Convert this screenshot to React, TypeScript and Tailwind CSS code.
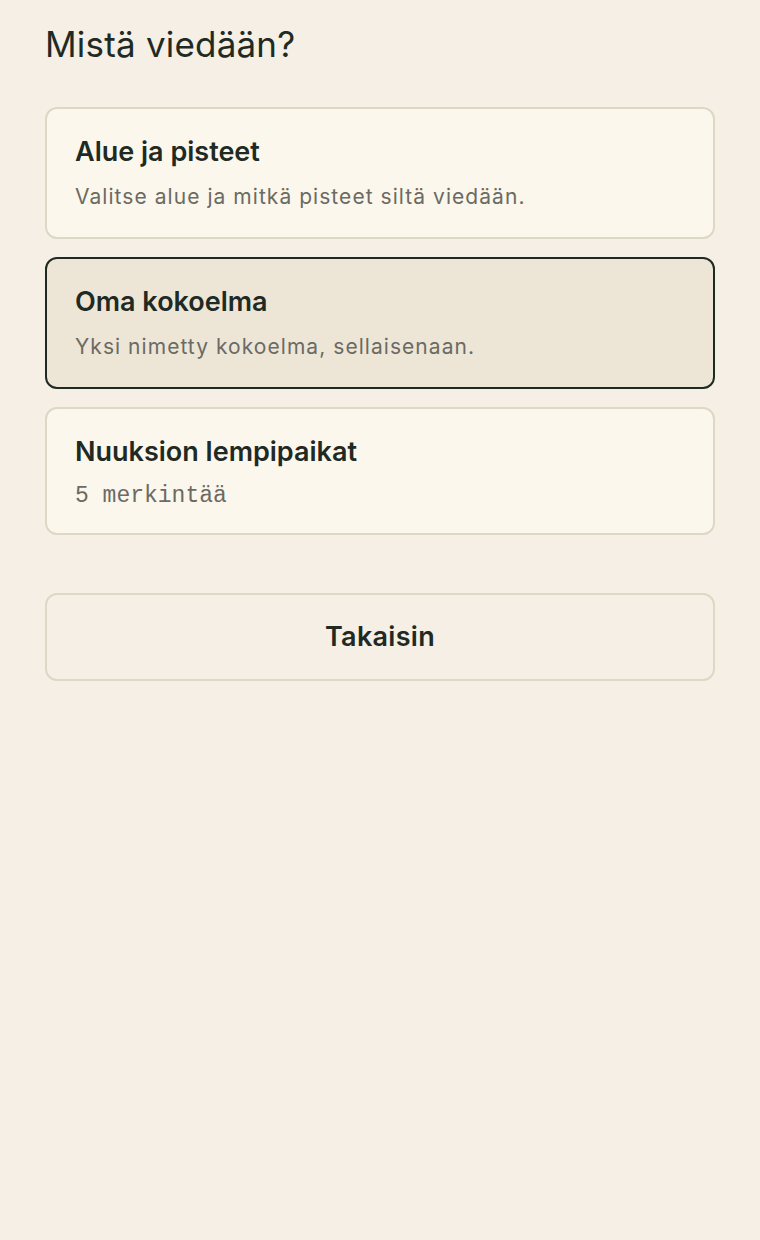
import React from "react";

const sans = { fontFamily: "Inter, Roboto, 'Noto Sans', sans-serif" };

function Card({
  title,
  sub,
  mono,
  selected,
}: {
  title: string;
  sub: string;
  mono?: boolean;
  selected?: boolean;
}) {
  return (
    <button
      type="button"
      className={
        "w-full text-left rounded-[12px] border-2 px-[28px] pt-[26px] pb-[24px] flex flex-col gap-[12px] " +
        (selected
          ? "bg-[#ede6d7] border-[#1f2a22]"
          : "bg-[#fbf7ec] border-[#dcd8c3]")
      }
    >
      <span className="text-[27px] leading-[34px] font-semibold text-[#1f2a24]">
        {title}
      </span>
      {mono ? (
        <span
          className="mt-[2px] text-[23px] leading-[26px] text-[#6b6a63]"
          style={{ fontFamily: "'Liberation Mono', 'DejaVu Sans Mono', monospace" }}
        >
          {sub}
        </span>
      ) : (
        <span className="text-[21px] leading-[32px] tracking-[1.05px] text-[#6b6a63]">{sub}</span>
      )}
    </button>
  );
}

export default function App() {
  return (
    <div className="min-h-[1240px] bg-[#f5efe5] px-[45px] pt-[23px]" style={sans}>
      <h1 className="text-[35px] leading-[43px] font-normal tracking-[0.2px] text-[#1f2a24]">
        Mistä viedään?
      </h1>
      <div className="mt-[41px] flex flex-col gap-[18px]">
        <Card title="Alue ja pisteet" sub="Valitse alue ja mitkä pisteet siltä viedään." />
        <Card title="Oma kokoelma" sub="Yksi nimetty kokoelma, sellaisenaan." selected />
        <Card title="Nuuksion lempipaikat" sub="5 merkintää" mono />
        <button
          type="button"
          className="mt-[40px] h-[88px] w-full rounded-[12px] border-2 border-[#dcd8c3] bg-transparent text-[27px] font-semibold tracking-[0.3px] text-[#1f2a24]"
        >
          Takaisin
        </button>
      </div>
    </div>
  );
}
